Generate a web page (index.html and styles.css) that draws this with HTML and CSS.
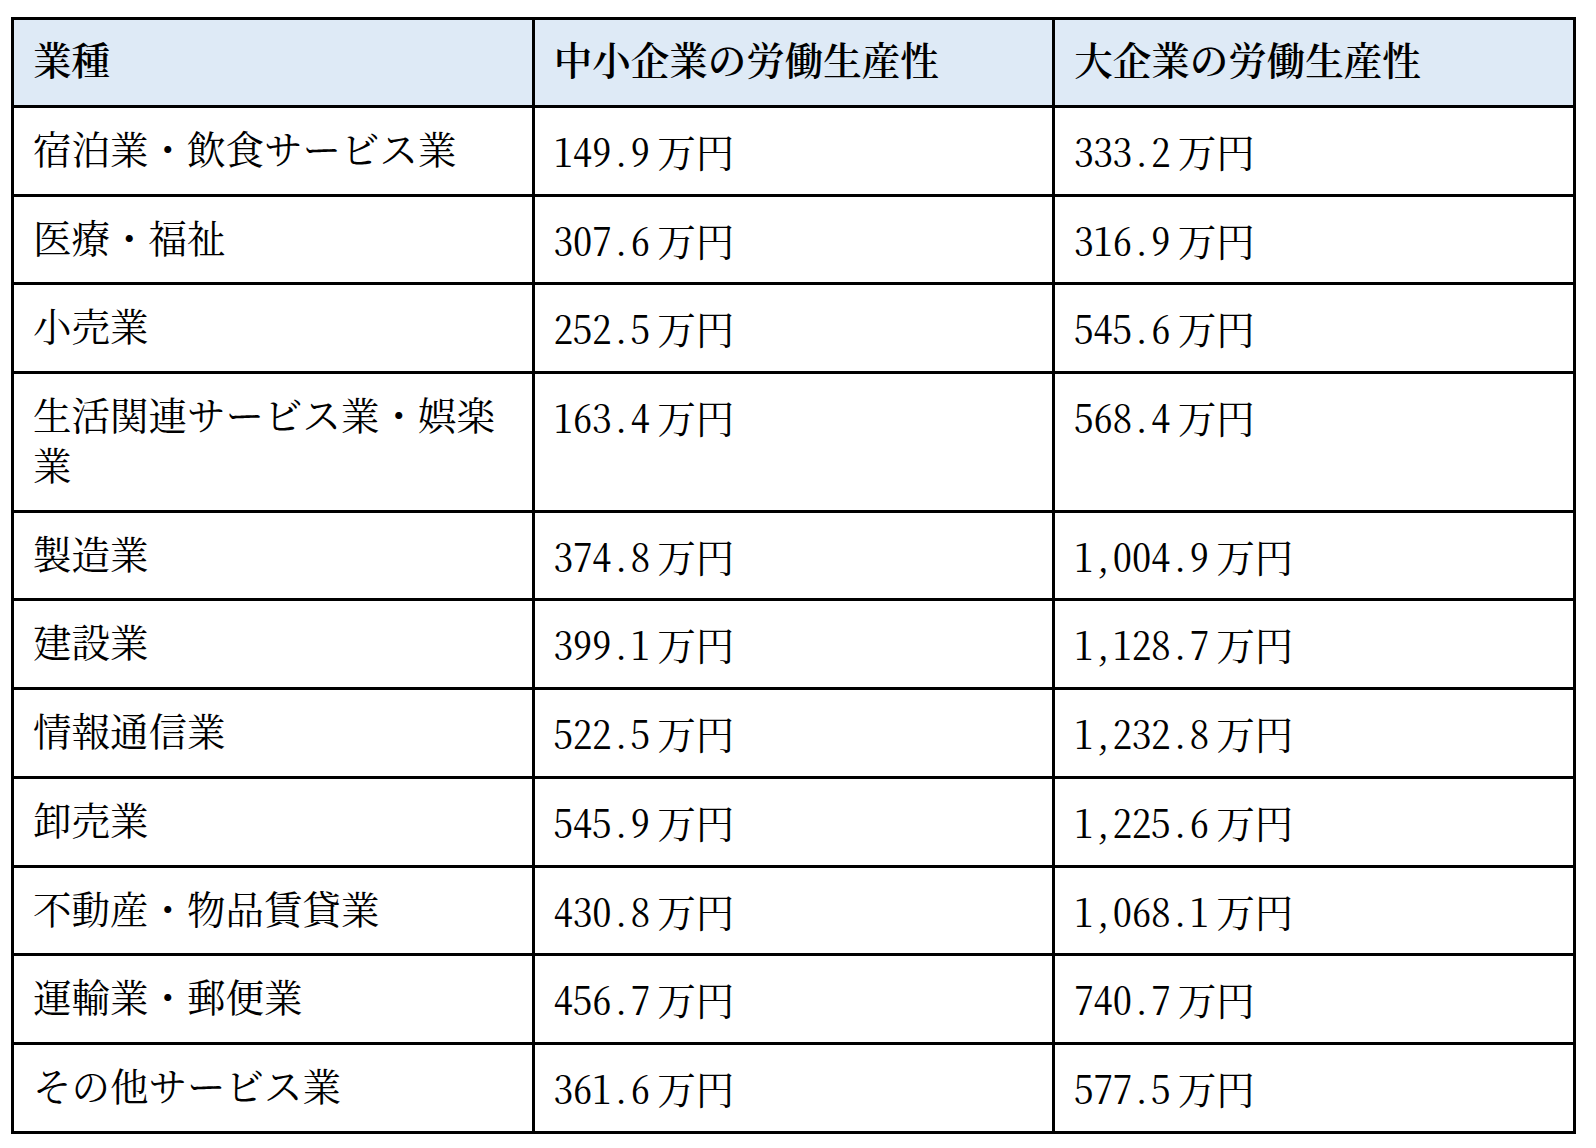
FILE: index.html
```html
<!DOCTYPE html>
<html lang="ja">
<head>
<meta charset="utf-8">
<title>業種別の労働生産性</title>
<link rel="stylesheet" href="styles.css">
</head>
<body>
<table class="prod-table">
  <thead>
    <tr>
      <th>業種</th>
      <th>中小企業の労働生産性</th>
      <th>大企業の労働生産性</th>
    </tr>
  </thead>
  <tbody>
    <tr><td>宿泊業・飲食サービス業</td><td class="num">149.9 万円</td><td class="num">333.2 万円</td></tr>
    <tr><td>医療・福祉</td><td class="num">307.6 万円</td><td class="num">316.9 万円</td></tr>
    <tr><td>小売業</td><td class="num">252.5 万円</td><td class="num">545.6 万円</td></tr>
    <tr><td>生活関連サービス業・娯楽業</td><td class="num">163.4 万円</td><td class="num">568.4 万円</td></tr>
    <tr><td>製造業</td><td class="num">374.8 万円</td><td class="num">1,004.9 万円</td></tr>
    <tr><td>建設業</td><td class="num">399.1 万円</td><td class="num">1,128.7 万円</td></tr>
    <tr><td>情報通信業</td><td class="num">522.5 万円</td><td class="num">1,232.8 万円</td></tr>
    <tr><td>卸売業</td><td class="num">545.9 万円</td><td class="num">1,225.6 万円</td></tr>
    <tr><td>不動産・物品賃貸業</td><td class="num">430.8 万円</td><td class="num">1,068.1 万円</td></tr>
    <tr><td>運輸業・郵便業</td><td class="num">456.7 万円</td><td class="num">740.7 万円</td></tr>
    <tr><td>その他サービス業</td><td class="num">361.6 万円</td><td class="num">577.5 万円</td></tr>
  </tbody>
</table>
</body>
</html>
```

FILE: styles.css
```css
html, body {
  margin: 0;
  padding: 0;
  background: #ffffff;
}

body {
  padding: 17px 0 0 11px;
  font-family: "Liberation Serif", "Noto Serif CJK JP", "IPAMincho", "Noto Sans CJK JP", serif;
  color: #000000;
}

.prod-table {
  width: 1565px;
  table-layout: fixed;
  border-collapse: separate;
  border-spacing: 0;
  border-top: 3px solid #000;
  border-left: 3px solid #000;
}

.prod-table th,
.prod-table td {
  width: 33.333%;
  border-right: 3px solid #000;
  border-bottom: 3px solid #000;
  padding: 18px 19px 17.7px;
  font-size: 38.5px;
  line-height: 50px;
  text-align: left;
  vertical-align: top;
}

.prod-table th {
  background: #deeaf6;
  font-weight: 600;
  height: 49px;
  padding-top: 17px;
  padding-bottom: 18px;
}

.prod-table .num {
  font-family: "Noto Serif CJK JP", "Liberation Serif", serif;
  font-feature-settings: "hwid" 1;
  word-spacing: -12px;
}
```
